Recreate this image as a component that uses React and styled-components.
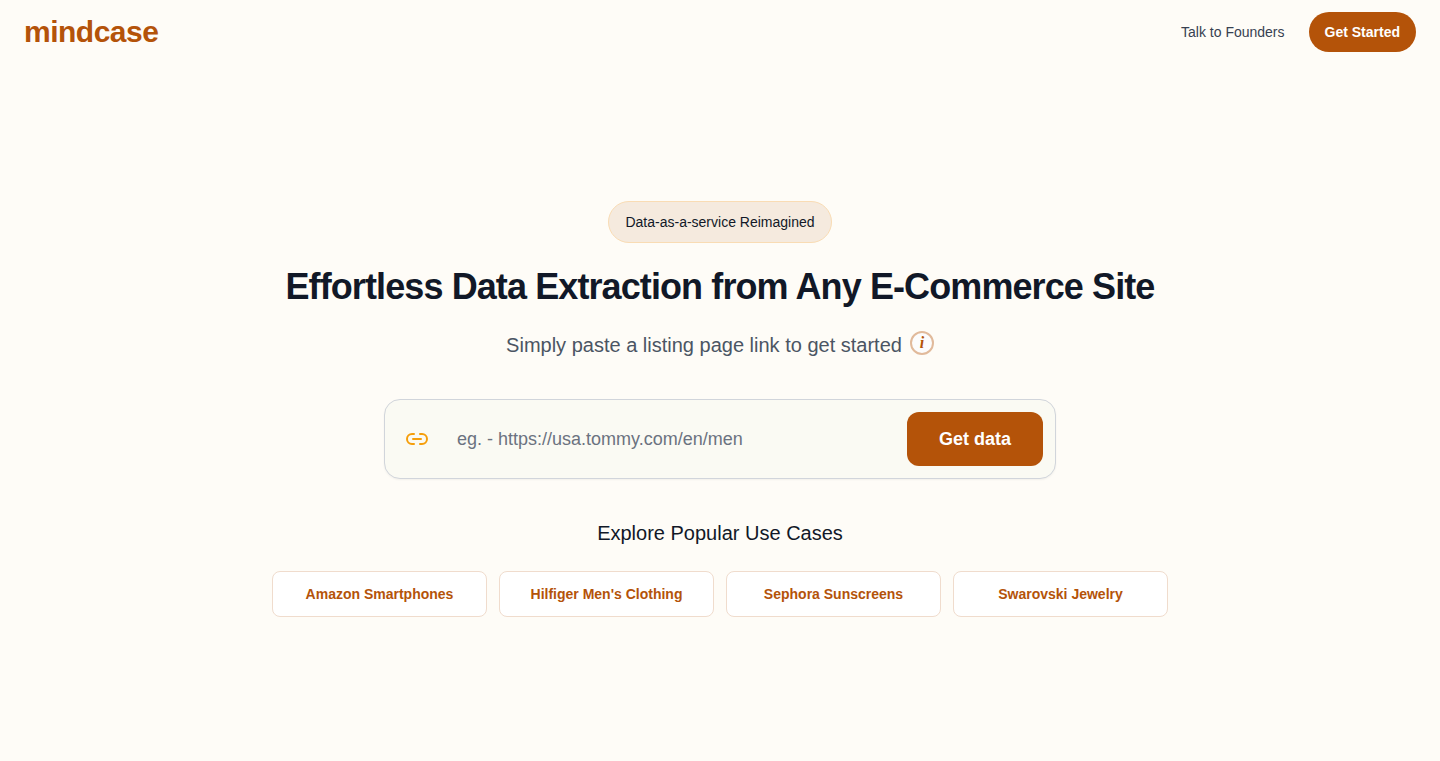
import { useState } from "react";
import styled, { createGlobalStyle } from "styled-components";
import { Link2 } from "lucide-react";

const MainColor = "#b45309";
const BgColor = "#fefcf7";
const TextColor = "#111827";

const useCases = [
  "Amazon Smartphones",
  "Hilfiger Men's Clothing",
  "Sephora Sunscreens",
  "Swarovski Jewelry",
];

const App = () => {
  const [url, setUrl] = useState("");

  const onSubmit = (e) => {
    e.preventDefault();
  };

  return (
    <Page>
      <GlobalStyle />
      <Header>
        <Logo href="#">mindcase</Logo>
        <Nav>
          <NavLink href="#founders">Talk to Founders</NavLink>
          <StartButton type="button">Get Started</StartButton>
        </Nav>
      </Header>
      <Main>
        <Tagline>Data-as-a-service Reimagined</Tagline>
        <Title>Effortless Data Extraction from Any E-Commerce Site</Title>
        <Subtitle>
          <span>Simply paste a listing page link to get started</span>
          <InfoButton type="button">i</InfoButton>
        </Subtitle>
        <SearchForm onSubmit={onSubmit}>
          <Link2 size={24} color="#f59e0b" aria-hidden="true" />
          <UrlInput
            type="text"
            aria-label="Listing page link"
            placeholder="eg. - https://usa.tommy.com/en/men"
            value={url}
            onChange={(e) => setUrl(e.target.value)}
          />
          <SubmitButton type="submit">Get data</SubmitButton>
        </SearchForm>
        <UseCasesTitle>Explore Popular Use Cases</UseCasesTitle>
        <UseCases>
          {useCases.map((name) => (
            <UseCaseButton key={name} type="button">
              {name}
            </UseCaseButton>
          ))}
        </UseCases>
      </Main>
    </Page>
  );
};

const GlobalStyle = createGlobalStyle`
  *, *::before, *::after {
    box-sizing: border-box;
  }

  body {
    margin: 0;
    background-color: ${BgColor};
    color: ${TextColor};
    font-family: "Liberation Sans", Arial, sans-serif;
  }

  button, input {
    font-family: inherit;
  }

  button {
    cursor: pointer;
  }
`;

const Page = styled.div`
  min-height: 100vh;
  display: flex;
  flex-direction: column;
`;

const Header = styled.header`
  display: flex;
  align-items: center;
  justify-content: space-between;
  padding: 12px 24px;
`;

const Logo = styled.a`
  font-size: 30px;
  line-height: 36px;
  font-weight: 700;
  letter-spacing: -0.5px;
  color: ${MainColor};
  text-decoration: none;
`;

const Nav = styled.nav`
  display: flex;
  align-items: center;
  gap: 24px;
`;

const NavLink = styled.a`
  font-size: 14px;
  line-height: 20px;
  color: #374151;
  text-decoration: none;
`;

const StartButton = styled.button`
  height: 40px;
  padding: 0 16px;
  border: none;
  border-radius: 20px;
  background-color: ${MainColor};
  color: #fff;
  font-size: 14px;
  font-weight: 700;
`;

const Main = styled.main`
  flex: 1;
  display: flex;
  flex-direction: column;
  align-items: center;
  justify-content: center;
  padding: 0 24px 8px;
  text-align: center;
`;

const Tagline = styled.div`
  padding: 10px 16px;
  border: 1px solid #f9dcb4;
  border-radius: 21px;
  background-color: #f5eade;
  font-size: 14px;
  line-height: 20px;
`;

const Title = styled.h1`
  margin: 24px 0;
  font-size: 36px;
  line-height: 40px;
  font-weight: 700;
  letter-spacing: -0.025em;
`;

const Subtitle = styled.div`
  display: flex;
  align-items: flex-start;
  gap: 8px;
  font-size: 20px;
  line-height: 28px;
  color: #4b5563;
`;

const InfoButton = styled.button`
  width: 24px;
  height: 24px;
  padding: 0;
  border: 2px solid #e1ba9b;
  border-radius: 50%;
  background-color: #fcfcfc;
  color: ${MainColor};
  font: italic 700 16px/20px "Liberation Serif", serif;
`;

const SearchForm = styled.form`
  display: flex;
  align-items: center;
  width: 100%;
  max-width: 672px;
  margin: 40px 0;
  padding: 12px 12px 12px 20px;
  border: 1px solid #d1d5db;
  border-radius: 16px;
  background-color: #fafaf3;
  box-shadow: 0 1px 2px rgba(0, 0, 0, 0.05);
`;

const UrlInput = styled.input`
  flex: 1;
  min-width: 0;
  padding: 13px 28px;
  border: none;
  outline: none;
  background: transparent;
  color: ${TextColor};
  font-size: 18px;
  line-height: 28px;

  &::placeholder {
    color: #6b7280;
  }
`;

const SubmitButton = styled.button`
  padding: 13px 32px;
  border: none;
  border-radius: 12px;
  background-color: ${MainColor};
  color: #fff;
  font-size: 18px;
  line-height: 28px;
  font-weight: 700;
`;

const UseCasesTitle = styled.h2`
  margin: 0 0 24px;
  font-size: 20px;
  line-height: 28px;
  font-weight: 400;
`;

const UseCases = styled.div`
  display: grid;
  grid-template-columns: repeat(4, 1fr);
  gap: 12px;
  width: 100%;
  max-width: 896px;
`;

const UseCaseButton = styled.button`
  height: 46px;
  padding: 0 16px;
  border: 1px solid #f0dccd;
  border-radius: 8px;
  background-color: #fff;
  color: ${MainColor};
  font-size: 14px;
  font-weight: 700;
`;

export default App;
